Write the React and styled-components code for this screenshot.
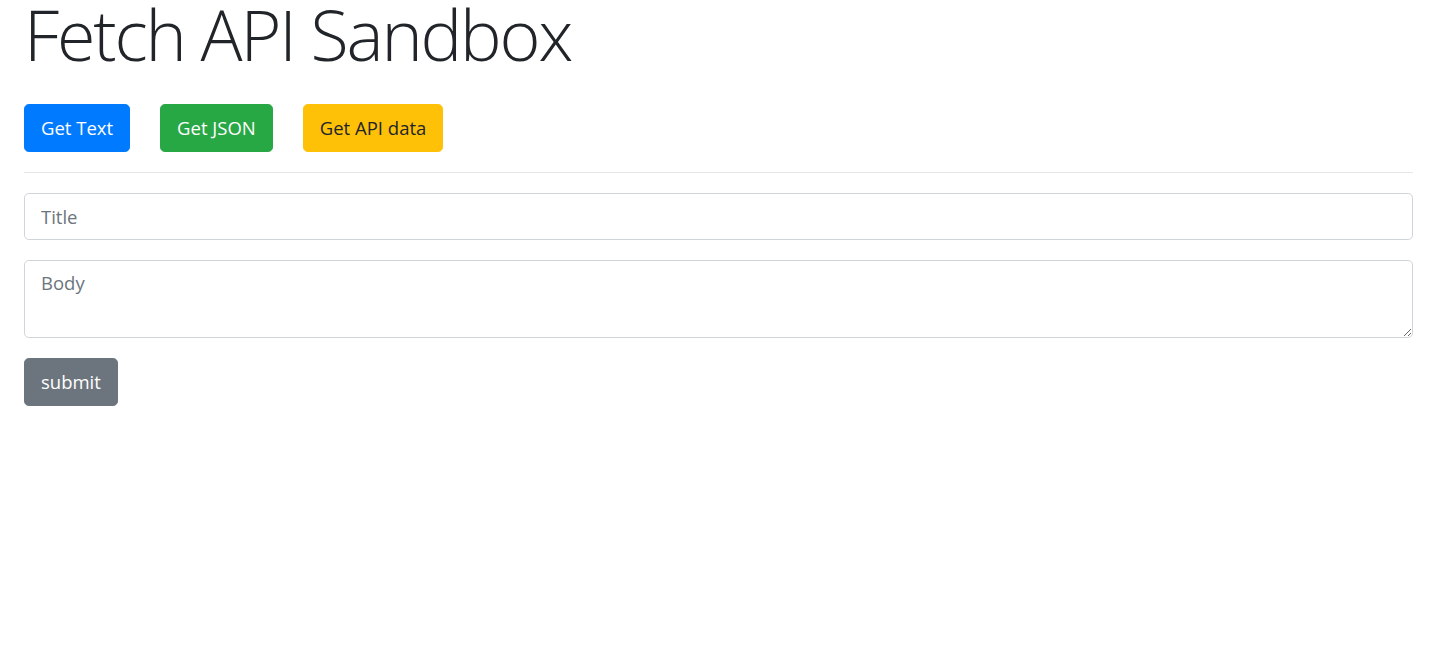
import React from 'react'
import styled, { createGlobalStyle } from 'styled-components'

const GlobalStyle = createGlobalStyle`
    * {
        box-sizing: border-box;
    }
    body {
        margin: 0;
        background: #fff;
        color: #212529;
        font-family: "Segoe UI", "Open Sans", "Liberation Sans", sans-serif;
        font-size: 16px;
        line-height: 1.5;
    }
`

const Container = styled.div`
    padding: 0 24px;
`

const Title = styled.h1`
    margin: 0 0 36px;
    font-size: 70px;
    font-weight: 300;
    line-height: 68px;
    letter-spacing: -2.2px;
    white-space: nowrap;
`

const ButtonRow = styled.div`
    display: flex;
    gap: 30px;
`

const colors = {
    primary: { bg: '#007bff', fg: '#fff' },
    success: { bg: '#28a745', fg: '#fff' },
    warning: { bg: '#ffc107', fg: '#212529' },
    secondary: { bg: '#6c757d', fg: '#fff' },
}

const Button = styled.button`
    display: inline-block;
    height: 48px;
    padding: 0 16px;
    border: 1px solid ${p => colors[p.$variant].bg};
    border-radius: 4.8px;
    background: ${p => colors[p.$variant].bg};
    color: ${p => colors[p.$variant].fg};
    font-family: inherit;
    font-size: 18.5px;
    line-height: 1.5;
    cursor: pointer;
`

const Divider = styled.hr`
    margin: 20px 0;
    border: 0;
    border-top: 1px solid rgba(0, 0, 0, 0.1);
`

const Form = styled.form`
    display: flex;
    flex-direction: column;
    align-items: flex-start;
    gap: 20px;
`

const fieldStyles = `
    display: block;
    width: 100%;
    padding: 8px 16px;
    border: 1px solid #ced4da;
    border-radius: 4.8px;
    background: #fff;
    color: #495057;
    font-family: inherit;
    font-size: 18.5px;
    line-height: 1.5;
    outline: none;

    &::placeholder {
        color: #6c757d;
    }
`

const Input = styled.input`
    ${fieldStyles}
    height: 47px;
`

const TextArea = styled.textarea`
    ${fieldStyles}
    height: 78px;
    resize: vertical;
`

export default function App() {
    return (
        <>
            <GlobalStyle />
            <Container>
                <Title>Fetch API Sandbox</Title>
                <ButtonRow>
                    <Button $variant="primary">Get Text</Button>
                    <Button $variant="success">Get JSON</Button>
                    <Button $variant="warning">Get API data</Button>
                </ButtonRow>
                <Divider />
                <Form onSubmit={e => e.preventDefault()}>
                    <Input type="text" placeholder="Title" aria-label="Title" />
                    <TextArea placeholder="Body" aria-label="Body" />
                    <Button $variant="secondary" type="submit">submit</Button>
                </Form>
            </Container>
        </>
    )
}
